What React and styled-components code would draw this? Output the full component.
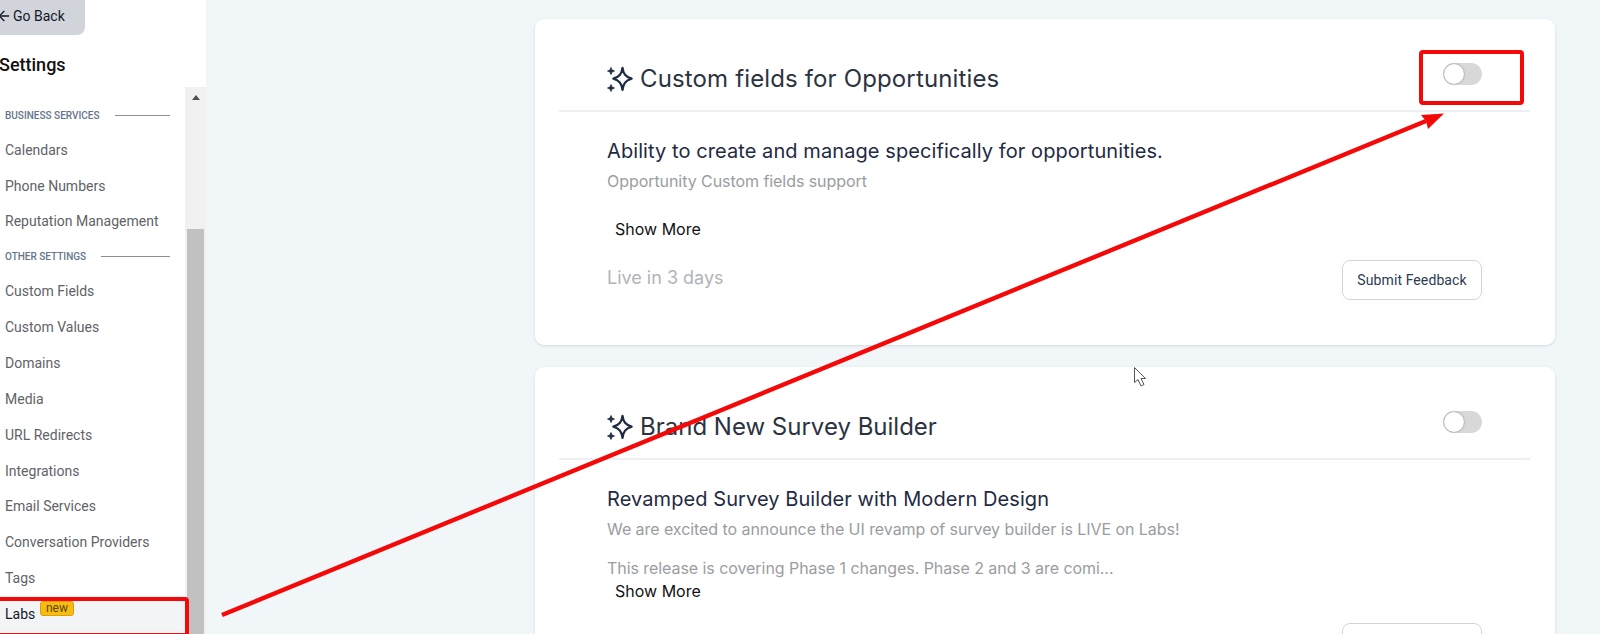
import React from 'react'
import styled, { createGlobalStyle } from 'styled-components'
import { ArrowLeft } from 'lucide-react'

const GlobalStyle = createGlobalStyle`
  html, body {
    margin: 0;
    height: 634px;
    overflow: hidden;
    background: #f1f6f9;
    font-family: 'Inter', 'Liberation Sans', sans-serif;
  }
  * {
    box-sizing: border-box;
  }
`

const Page = styled.div`
  position: relative;
  display: flex;
  width: 1600px;
  height: 634px;
  overflow: hidden;
`

const Sidebar = styled.aside`
  display: flex;
  flex-direction: column;
  flex: 0 0 206px;
  height: 634px;
  background: #fff;
  font-family: 'Roboto', sans-serif;
`

const BackButton = styled.button`
  display: flex;
  align-items: center;
  gap: 1px;
  width: 95px;
  height: 35px;
  margin-left: -10px;
  padding: 0 0 4px 6px;
  border: 0;
  border-radius: 0 0 8px 8px;
  background: #d1d5db;
  color: #111827;
  font: 400 14px 'Roboto', sans-serif;
`

const Heading = styled.h2`
  margin: 19px 0 0 -1px;
  height: 33px;
  color: #111;
  font-size: 18px;
  font-weight: 500;
  line-height: 22px;
`

const ListRow = styled.div`
  display: flex;
  flex: 1;
  min-height: 0;
`

const List = styled.nav`
  flex: 1;
  overflow: hidden;
`

const Items = styled.div`
  margin-top: -26px;
`

const Item = styled.a`
  position: relative;
  display: flex;
  align-items: center;
  height: 35.85px;
  padding-left: 5px;
  background: ${p => (p.$active ? '#f3f4f6' : 'transparent')};
  color: ${p => (p.$active ? '#111827' : '#5f6368')};
  font-size: 14px;
`

const Section = styled.div`
  display: flex;
  align-items: center;
  gap: 15px;
  height: ${p => p.$height}px;
  margin-top: ${p => p.$top || 0}px;
  padding: 0 15px 0 5px;
  color: #64748b;
  font-size: 10px;
  font-weight: 500;
  text-transform: uppercase;

  &::after {
    content: '';
    flex: 1;
    height: 1px;
    background: #8a8d9c;
  }
`

const NewBadge = styled.span`
  position: absolute;
  top: 5px;
  left: 40px;
  width: 34px;
  height: 15px;
  border: 1px solid #d9a008;
  border-radius: 3px;
  background: #f8bb14;
  color: #5c4500;
  font-size: 12px;
  line-height: 12px;
  text-align: center;
`

const ScrollTrack = styled.div`
  flex: 0 0 21px;
  padding: 0 2px;
  background: #f1f1f1;
`

const ScrollArrow = styled.div`
  width: 0;
  height: 0;
  margin: 8px auto 0;
  border-left: 4px solid transparent;
  border-right: 4px solid transparent;
  border-bottom: 5px solid #505050;
`

const ScrollThumb = styled.div`
  height: 420px;
  margin-top: 129px;
  background: #c1c1c1;
`

const Main = styled.main`
  display: flex;
  flex-direction: column;
  flex: 1;
  gap: 22px;
  padding: 19px 45px 0 329px;
`

const Card = styled.section`
  flex: none;
  padding: 0 25px 45px 24px;
  border-radius: 9px;
  background: #fff;
  box-shadow: 0 1px 3px rgba(30, 41, 59, 0.14);
`

const CardHeader = styled.header`
  display: flex;
  justify-content: space-between;
  align-items: flex-start;
  height: 93px;
  padding: 44px 48px 0;
  border-bottom: 2px solid #eceff3;
`

const CardTitle = styled.h3`
  display: flex;
  align-items: center;
  gap: 7px;
  margin: 0;
  color: #2c3340;
  font-size: 24px;
  font-weight: 400;
  line-height: 32px;
  letter-spacing: ${p => p.$tracking || 0}px;
`

const Toggle = styled.span`
  position: relative;
  display: block;
  width: 39px;
  height: 22px;
  border-radius: 11px;
  background: #d8d8d8;

  &::before {
    content: '';
    position: absolute;
    top: 1px;
    left: 1px;
    width: 20px;
    height: 20px;
    border-radius: 50%;
    background: #fff;
    box-shadow: 0 0 2px rgba(0, 0, 0, 0.45);
  }
`

const CardBody = styled.div`
  padding: 25px 48px 0;
`

const Headline = styled.h4`
  margin: 0 0 4px;
  color: #1f2a44;
  font-size: 20px;
  font-weight: 400;
  line-height: 28px;
  letter-spacing: 0.08px;
`

const Description = styled.p`
  margin: ${p => p.$top || 0}px 0 0;
  color: #9a9da1;
  font-size: 16px;
  line-height: 24px;
  letter-spacing: -0.06px;
`

const ShowMore = styled.button`
  display: block;
  height: 24px;
  margin-top: ${p => p.$top || 0}px;
  padding: 0 0 0 8px;
  border: 0;
  background: none;
  color: #111;
  font: 400 16px/24px 'Inter', sans-serif;
`

const CardFooter = styled.footer`
  display: flex;
  justify-content: space-between;
  align-items: flex-start;
  margin-top: ${p => p.$top || 19}px;
`

const LiveLabel = styled.span`
  margin-top: ${p => p.$drop || 0}px;
  color: #b0b4b9;
  font-size: 18px;
  line-height: 36px;
`

const FeedbackButton = styled.button`
  width: 140px;
  height: 40px;
  padding: 0 0 1px;
  border: 1px solid #d0d5dd;
  border-radius: 8px;
  background: #fff;
  color: #2d3a52;
  font: 400 14px 'Roboto', sans-serif;
  letter-spacing: 0.1px;
`

// screenshot annotation: red frames, arrow and the mouse pointer lie on top of the page
const RedFrame = styled.div`
  position: absolute;
  top: ${p => p.$top}px;
  left: ${p => p.$left}px;
  width: ${p => p.$width}px;
  height: ${p => p.$height}px;
  border: 4px solid #f40808;
  border-radius: 4px;
`

const Overlay = styled.svg`
  position: absolute;
  top: 0;
  left: 0;
  pointer-events: none;
`

const SparkIcon = () => (
  <svg width="26" height="26" viewBox="0 0 26 26" fill="none" stroke="#1e2b45" strokeWidth="2.3" strokeLinejoin="round">
    <path d="M15.5 1.8C16.4 8 18.4 10.6 24.6 12.7 18.4 14.8 16.4 17.4 15.5 23.8 14.6 17.4 12.6 14.8 6.4 12.7 12.6 10.6 14.6 8 15.5 1.8Z" />
    <path d="M4 1.5L5 4 7.5 5 5 6 4 8.5 3 6 .5 5 3 4ZM4 18.5L5 21 7.5 22 5 23 4 25.5 3 23 .5 22 3 21Z" fill="#1e2b45" strokeWidth="0.8" />
  </svg>
)

const settingsGroups = [
  { label: 'Business Services', height: 33, top: 2, items: ['Calendars', 'Phone Numbers', 'Reputation Management'] },
  { label: 'Other Settings', height: 34, items: ['Custom Fields', 'Custom Values', 'Domains', 'Media', 'URL Redirects', 'Integrations', 'Email Services', 'Conversation Providers', 'Tags'] },
]

export default function App() {
  return (
    <Page>
      <GlobalStyle />
      <Sidebar>
        <BackButton><ArrowLeft size={16} strokeWidth={2} />Go Back</BackButton>
        <Heading>Settings</Heading>
        <ListRow>
          <List>
            <Items>
              <Item>Opportunities</Item>
              {settingsGroups.map(group => (
                <React.Fragment key={group.label}>
                  <Section $height={group.height} $top={group.top}>{group.label}</Section>
                  {group.items.map(item => <Item key={item}>{item}</Item>)}
                </React.Fragment>
              ))}
              <Item $active>Labs<NewBadge>new</NewBadge></Item>
            </Items>
          </List>
          <ScrollTrack>
            <ScrollArrow />
            <ScrollThumb />
          </ScrollTrack>
        </ListRow>
      </Sidebar>

      <Main>
        <Card>
          <CardHeader>
            <CardTitle $tracking={0.14}><SparkIcon />Custom fields for Opportunities</CardTitle>
            <Toggle />
          </CardHeader>
          <CardBody>
            <Headline>Ability to create and manage specifically for opportunities.</Headline>
            <Description>Opportunity Custom fields support</Description>
            <ShowMore $top={24}>Show More</ShowMore>
            <CardFooter>
              <LiveLabel>Live in 3 days</LiveLabel>
              <FeedbackButton>Submit Feedback</FeedbackButton>
            </CardFooter>
          </CardBody>
        </Card>
        <Card>
          <CardHeader>
            <CardTitle><SparkIcon />Brand New Survey Builder</CardTitle>
            <Toggle />
          </CardHeader>
          <CardBody>
            <Headline>Revamped Survey Builder with Modern Design</Headline>
            <Description>We are excited to announce the UI revamp of survey builder is LIVE on Labs!</Description>
            <Description $top={15}>This release is covering Phase 1 changes. Phase 2 and 3 are comi...</Description>
            <ShowMore $top={-1}>Show More</ShowMore>
            <CardFooter $top={20}>
              <LiveLabel $drop={3}>Live in 3 days</LiveLabel>
              <FeedbackButton>Submit Feedback</FeedbackButton>
            </CardFooter>
          </CardBody>
        </Card>
      </Main>

      <RedFrame $top={50} $left={1419} $width={105} $height={55} />
      <RedFrame $top={597} $left={-6} $width={195} $height={40} />
      <Overlay width="1600" height="634" viewBox="0 0 1600 634">
        <path d="M222 615L1426 121" stroke="#f40808" strokeWidth="4.4" fill="none" />
        <path d="M1444 113.5L1421 115 1426 121 1428 129Z" fill="#f40808" />
        <path d="M1134.5 367.5V382.5L1138 379.5 1141 386 1144 384.5 1141 378.5H1145.5Z" fill="#fff" stroke="#555" strokeWidth="1" />
      </Overlay>
    </Page>
  )
}
